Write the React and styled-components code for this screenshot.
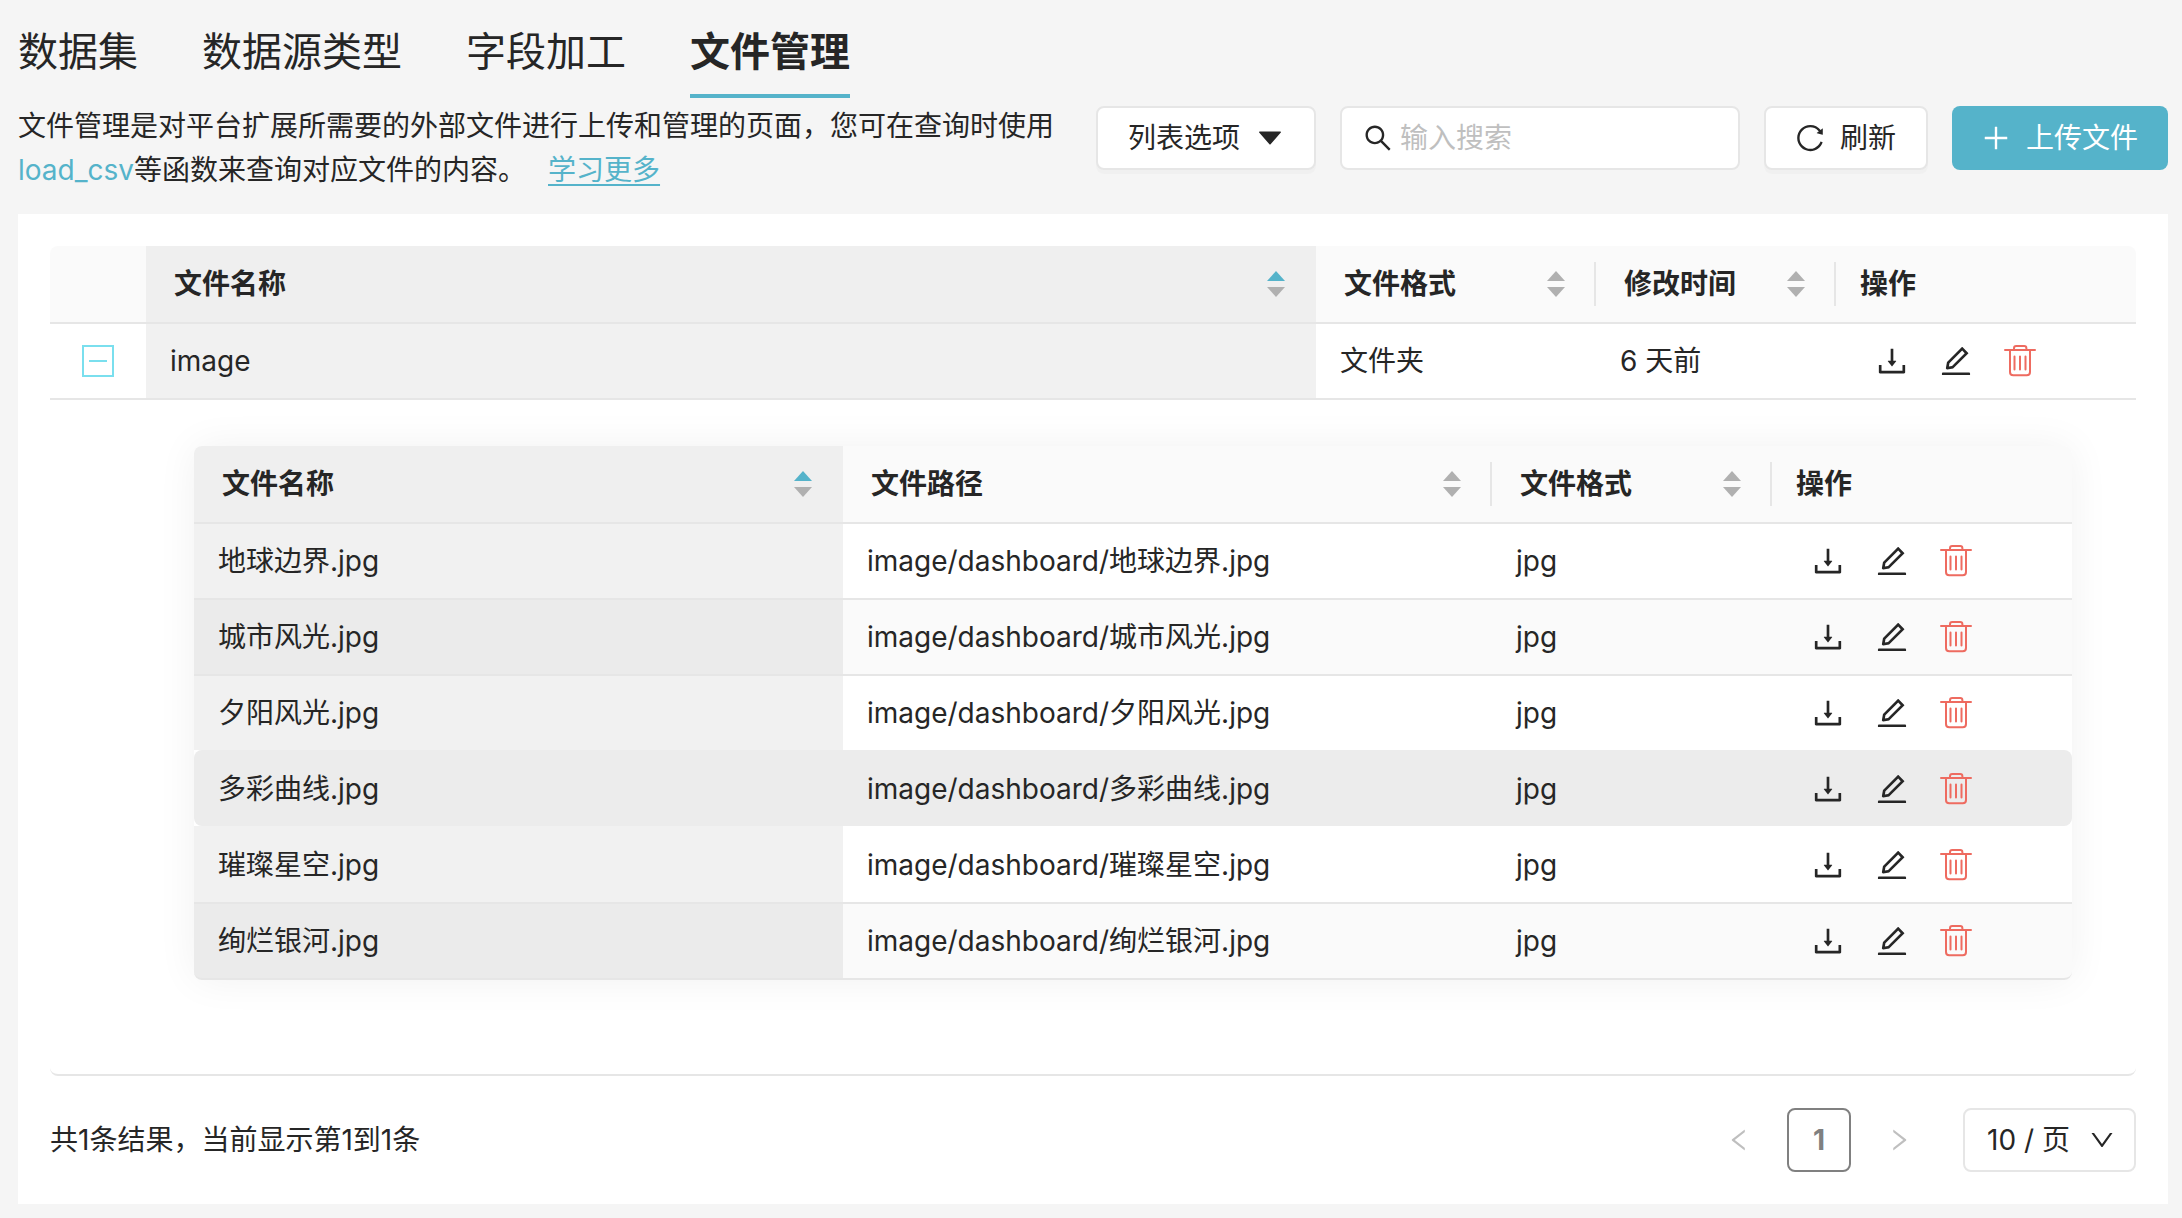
import { useState } from 'react'

import styled, { createGlobalStyle, css } from 'styled-components'
import {
  AiFillCaretDown,
  AiOutlineDown,
  AiOutlineDownload,
  AiOutlineEdit,
  AiOutlineLeft,
  AiOutlinePlus,
  AiOutlineReload,
  AiOutlineRight,
  AiOutlineSearch
} from 'react-icons/ai'

const GlobalStyle = createGlobalStyle`
  *, *::before, *::after {
    box-sizing: border-box;
  }

  body {
    margin: 0;
    background-color: #f5f5f5;
    color: #262626;
    font-family: Inter, "Noto Sans CJK SC", sans-serif;
    font-size: 28px;
    line-height: 44px;
  }

  button, input, select {
    margin: 0;
    color: inherit;
    font: inherit;
  }

  button {
    cursor: pointer;
  }

  svg {
    display: block;
    flex-shrink: 0;
  }
`

const Page = styled.div`
  padding: 0 14px 14px 18px;
`

const Tabs = styled.nav`
  display: flex;
  gap: 64px;
`

const Tab = styled.a`
  padding: 24px 0 14px;
  border-bottom: 4px solid ${props => props.$active ? '#55b3ca' : 'transparent'};
  color: #262626;
  font-size: 40px;
  font-weight: ${props => props.$active ? 700 : 400};
  line-height: 56px;
  text-decoration: none;
`

const Header = styled.header`
  display: flex;
  align-items: flex-start;
  gap: 24px;
  margin: 6px 0 22px;
`

const Description = styled.p`
  flex: 1;
  margin: 0;
`

const Code = styled.span`
  color: #55b3ca;
`

const LearnMore = styled.a`
  margin-left: 22px;
  color: #55b3ca;
  text-decoration: underline;
  text-decoration-skip-ink: none;
  text-decoration-thickness: 2px;
  text-underline-offset: 4px;
`

const Toolbar = styled.div`
  display: flex;
  gap: 24px;
  padding-top: 2px;
`

const Button = styled.button`
  display: flex;
  align-items: center;
  gap: 16px;
  height: 64px;
  padding: 0 30px;
  border: 2px solid #e6e6e6;
  border-radius: 8px;
  background-color: #fff;
  box-shadow: 0 4px 0 rgba(0, 0, 0, 0.02);
  white-space: nowrap;

  svg {
    margin: 0 -2px;
  }

  ${props => props.$primary && css`
    border: none;
    background-color: #55b3ca;
    box-shadow: none;
    color: #fff;
  `}
`

const SearchBox = styled.label`
  display: flex;
  align-items: center;
  gap: 6px;
  width: 400px;
  height: 64px;
  padding: 0 20px;
  border: 2px solid #e6e6e6;
  border-radius: 8px;
  background-color: #fff;
`

const SearchInput = styled.input`
  flex: 1;
  min-width: 0;
  padding: 0;
  border: none;
  outline: none;
  background: none;

  &::placeholder {
    color: #bfbfbf;
    opacity: 1;
  }
`

const Card = styled.main`
  padding: 32px;
  background-color: #fff;
`

const Table = styled.table`
  width: 100%;
  border-collapse: separate;
  border-spacing: 0;
  table-layout: fixed;
  text-align: left;
`

const Col = styled.col`
  width: ${props => props.$width ? `${props.$width}px` : 'auto'};
`

const Th = styled.th`
  padding: 16px 0;
  background-color: ${props => props.$sorted ? '#efefef' : '#fafafa'};
  font-weight: 700;

  &:first-child {
    border-top-left-radius: 8px;
  }

  &:last-child {
    border-top-right-radius: 8px;
  }
`

const ThContent = styled.div`
  display: flex;
  align-items: center;
  justify-content: space-between;
  padding: ${props => props.$sortable ? '0 29px 0 28px' : '0 24px'};
  border-right: 2px solid ${props => props.$divider ? '#e6e6e6' : 'transparent'};
`

const SortButton = styled.button`
  padding: 0;
  border: none;
  background: none;
`

const Td = styled.td`
  padding: 15px 24px;
  border-top: 2px solid #e6e6e6;
  background-color: ${props => props.$sorted ? '#f1f1f1' : '#fff'};
`

const Row = styled.tr`
  ${props => props.$striped && css`
    > ${Td} {
      background-color: #fafafa;
    }

    > ${Td}:first-child {
      background-color: #ebebeb;
    }
  `}

  ${props => props.$selected && css`
    > ${Td}, > ${Td}:first-child {
      border-top-color: transparent;
      background-color: #ececec;
    }

    > ${Td}:first-child {
      border-radius: 8px 0 0 8px;
    }

    > ${Td}:last-child {
      border-radius: 0 8px 8px 0;
    }

    & + tr > ${Td} {
      border-top-color: transparent;
    }
  `}

  &:last-child > ${Td} {
    border-bottom: 2px solid #e6e6e6;
  }

  &:last-child > ${Td}:first-child {
    border-bottom-left-radius: 8px;
  }

  &:last-child > ${Td}:last-child {
    border-bottom-right-radius: 8px;
  }
`

const ExpandCell = styled(Td)`
  padding: 0 32px;
`

const ExpandButton = styled.button`
  display: flex;
  align-items: center;
  justify-content: center;
  width: 32px;
  height: 32px;
  padding: 0;
  border: 2px solid #7adfee;
  background: none;

  &::before {
    content: '';
    width: 18px;
    height: 2px;
    background-color: #7adfee;
  }
`

const ExpandedCell = styled(Td)`
  padding: 46px 64px 94px 144px;
`

const NestedTable = styled.div`
  border-radius: 8px;
  box-shadow: 0 0 40px rgba(0, 0, 0, 0.06);
`

const Actions = styled.div`
  display: flex;
`

const ActionButton = styled.button`
  display: flex;
  align-items: center;
  justify-content: center;
  width: 64px;
  height: 44px;
  padding: 0;
  border: none;
  background: none;
`

const Footer = styled.footer`
  display: flex;
  align-items: center;
  justify-content: space-between;
  margin-top: 32px;
`

const Pagination = styled.div`
  display: flex;
  gap: 16px;
`

const PageButton = styled.button`
  display: flex;
  align-items: center;
  justify-content: center;
  width: 64px;
  height: 64px;
  padding: 0;
  border: 2px solid ${props => props.$current ? '#808080' : 'transparent'};
  border-radius: 8px;
  background: none;
  color: ${props => props.$current ? '#808080' : '#bfbfbf'};
  font-weight: 700;
`

const PageSize = styled.div`
  position: relative;
  margin-left: 16px;

  svg {
    position: absolute;
    top: 18px;
    right: 20px;
    pointer-events: none;
  }
`

const PageSizeSelect = styled.select`
  width: 173px;
  height: 64px;
  padding: 0 22px;
  border: 2px solid #e6e6e6;
  border-radius: 8px;
  appearance: none;
  background-color: #fff;
`

const files = ['地球边界.jpg', '城市风光.jpg', '夕阳风光.jpg', '多彩曲线.jpg', '璀璨星空.jpg', '绚烂银河.jpg']

const tabs = ['数据集', '数据源类型', '字段加工', '文件管理']

function TrashIcon () {
  return (
    <svg width="32" height="32" viewBox="0 0 32 32" fill="none" stroke="#ee6b60" strokeWidth="2" strokeLinecap="round">
      <path d="M1 5H31" />
      <path d="M10 5V3.2Q10 1 12.2 1H20.2Q22.4 1 22.4 3.2V5" />
      <path d="M6 5.5V27Q6 30.3 9.3 30.3H22.7Q26 30.3 26 27V5.5" />
      <path d="M10.5 11.5V24.5M16 11.5V24.5M21.5 11.5V24.5" />
    </svg>
  )
}

function SortHeader ({ children, sorted, divider }) {
  return (
    <Th scope="col" $sorted={sorted}>
      <ThContent $sortable $divider={divider}>
        {children}
        <SortButton aria-label={`按${children}排序`}>
          <svg width="18" height="26" viewBox="0 0 18 26" fill="#b0b0b0">
            <path d="M9 0L18 10H0Z" fill={sorted ? '#55b3ca' : '#b0b0b0'} />
            <path d="M0 16H18L9 26Z" />
          </svg>
        </SortButton>
      </ThContent>
    </Th>
  )
}

function ActionHeader () {
  return (
    <Th scope="col">
      <ThContent>操作</ThContent>
    </Th>
  )
}

function RowActions () {
  return (
    <Actions>
      <ActionButton aria-label="下载"><AiOutlineDownload size={36} /></ActionButton>
      <ActionButton aria-label="编辑"><AiOutlineEdit size={36} /></ActionButton>
      <ActionButton aria-label="删除"><TrashIcon /></ActionButton>
    </Actions>
  )
}

function FolderFiles () {
  return (
    <NestedTable>
      <Table>
        <colgroup>
          <Col />
          <Col />
          <Col $width={280} />
          <Col $width={300} />
        </colgroup>
        <thead>
          <tr>
            <SortHeader sorted>文件名称</SortHeader>
            <SortHeader divider>文件路径</SortHeader>
            <SortHeader divider>文件格式</SortHeader>
            <ActionHeader />
          </tr>
        </thead>
        <tbody>
          {files.map((file, index) => (
            <Row key={file} $striped={index % 2 === 1} $selected={index === 3}>
              <Td $sorted>{file}</Td>
              <Td>image/dashboard/{file}</Td>
              <Td>jpg</Td>
              <Td><RowActions /></Td>
            </Row>
          ))}
        </tbody>
      </Table>
    </NestedTable>
  )
}

function App () {
  const [expanded, setExpanded] = useState(true)
  const [search, setSearch] = useState('')

  return (
    <Page>
      <GlobalStyle />

      <Tabs>
        {tabs.map(tab => (
          <Tab key={tab} href="#" $active={tab === '文件管理'}>{tab}</Tab>
        ))}
      </Tabs>

      <Header>
        <Description>
          文件管理是对平台扩展所需要的外部文件进行上传和管理的页面，您可在查询时使用
          <Code>load_csv</Code>等函数来查询对应文件的内容。
          <LearnMore href="#">学习更多</LearnMore>
        </Description>
        <Toolbar>
          <Button>列表选项<AiFillCaretDown size={32} /></Button>
          <SearchBox>
            <AiOutlineSearch size={32} />
            <SearchInput
              aria-label="搜索"
              placeholder="输入搜索"
              value={search}
              onChange={e => setSearch(e.target.value)}
            />
          </SearchBox>
          <Button><AiOutlineReload size={32} />刷新</Button>
          <Button $primary><AiOutlinePlus size={32} />上传文件</Button>
        </Toolbar>
      </Header>

      <Card>
        <Table>
          <colgroup>
            <Col $width={96} />
            <Col />
            <Col $width={280} />
            <Col $width={240} />
            <Col $width={300} />
          </colgroup>
          <thead>
            <tr>
              <Th />
              <SortHeader sorted>文件名称</SortHeader>
              <SortHeader divider>文件格式</SortHeader>
              <SortHeader divider>修改时间</SortHeader>
              <ActionHeader />
            </tr>
          </thead>
          <tbody>
            <Row>
              <ExpandCell>
                <ExpandButton
                  aria-label="展开或收起"
                  aria-expanded={expanded}
                  onClick={() => setExpanded(!expanded)}
                />
              </ExpandCell>
              <Td $sorted>image</Td>
              <Td>文件夹</Td>
              <Td>6 天前</Td>
              <Td><RowActions /></Td>
            </Row>
            {
              expanded &&
              <Row>
                <ExpandedCell colSpan={5}><FolderFiles /></ExpandedCell>
              </Row>
            }
          </tbody>
        </Table>

        <Footer>
          <span>共1条结果，当前显示第1到1条</span>
          <Pagination>
            <PageButton aria-label="上一页"><AiOutlineLeft size={28} /></PageButton>
            <PageButton $current>1</PageButton>
            <PageButton aria-label="下一页"><AiOutlineRight size={28} /></PageButton>
            <PageSize>
              <PageSizeSelect aria-label="每页条数">
                <option>10 / 页</option>
                <option>20 / 页</option>
                <option>50 / 页</option>
              </PageSizeSelect>
              <AiOutlineDown size={28} />
            </PageSize>
          </Pagination>
        </Footer>
      </Card>
    </Page>
  )
}

export default App
